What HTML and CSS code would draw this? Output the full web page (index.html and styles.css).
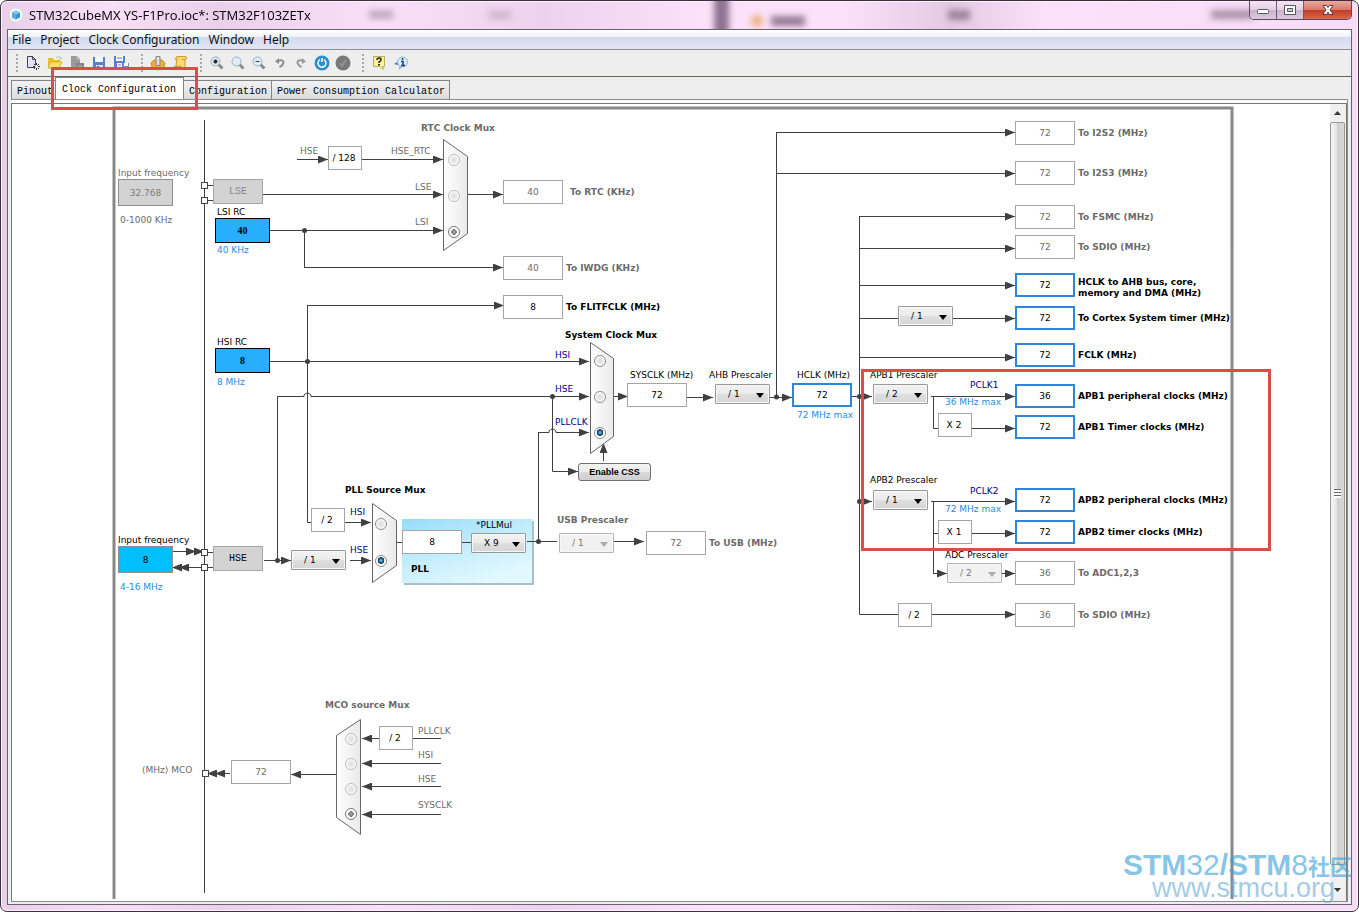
FILE: index.html
```html
<!DOCTYPE html>
<html lang="en">
<head>
    <meta charset="UTF-8">
    <meta name="viewport" content="width=device-width, initial-scale=1.0">
    <title>STM32CubeMX YS-F1Pro.ioc*: STM32F103ZETx</title>
    <link rel="stylesheet" href="styles.css">
</head>
<body>
<div class="window">
    <!-- Glass behind the title bar -->
    <svg class="glass" aria-hidden="true">
        <defs>
            <filter id="soft" x="-50%" y="-50%" width="200%" height="200%"><feGaussianBlur stdDeviation="3"/></filter>
        </defs>
        <g filter="url(#soft)">
            <rect x="368" y="9" width="24" height="9" fill="#a893a8" opacity=".7"/>
            <rect x="488" y="10" width="22" height="8" fill="#bfa5bf" opacity=".7"/>
            <rect x="713" y="-6" width="15" height="42" fill="#8d7392"/>
            <circle cx="756" cy="20" r="6" fill="#eab27e"/>
            <rect x="770" y="15" width="34" height="10" fill="#8a6f8a" opacity=".9"/>
            <rect x="947" y="9" width="22" height="10" fill="#8a6f8a" opacity=".8"/>
            <rect x="1210" y="9" width="42" height="9" fill="#8a6f8a" opacity=".7"/>
        </g>
    </svg>

    <header class="titlebar">
        <svg class="app-icon" width="16" height="16" viewBox="0 0 16 16" aria-hidden="true">
            <circle cx="8" cy="8" r="7" fill="#f6fbff" stroke="#cfdcea"/>
            <path d="M8 3.500 12 5.500V10.500L8 12.500 4 10.500V5.500Z" fill="#3c95d2"/>
            <path d="M8 3.500 12 5.500 8 7.500 4 5.500Z" fill="#8cc8ec"/>
            <path d="M8 7.500V12.500L4 10.500V5.500Z" fill="#5aaade"/>
        </svg>
        <h1>STM32CubeMX YS-F1Pro.ioc*: STM32F103ZETx</h1>
        <div class="caption-buttons">
            <button type="button" aria-label="Minimize">
                <svg width="14" height="12" viewBox="0 0 14 12"><rect x="1.500" y="5.500" width="11" height="4" rx="1" fill="#fff" stroke="#535666"/></svg>
            </button>
            <button type="button" aria-label="Maximize">
                <svg width="14" height="12" viewBox="0 0 14 12"><path d="M1.500 1.500h11v9h-11z" fill="#fff" stroke="#535666"/><path d="M4.500 4.500h5v3h-5z" fill="#d9c6dc" stroke="#535666"/></svg>
            </button>
            <button type="button" class="close" aria-label="Close">
                <svg width="14" height="12" viewBox="0 0 14 12"><path d="M2 1.500h3.500L7 3.500 8.500 1.500H12L9 5.800 12.200 10.500H8.600L7 8.200 5.400 10.500H1.800L5 5.800Z" fill="#fff" stroke="#5d3a40"/></svg>
            </button>
        </div>
    </header>

    <div class="client">
        <nav class="menubar">
            <a href="#">File</a>
            <a href="#">Project</a>
            <a href="#">Clock Configuration</a>
            <a href="#">Window</a>
            <a href="#">Help</a>
        </nav>

        <div class="toolbar" role="toolbar" aria-label="Tools">
            <div class="tool-group">
                <button type="button" aria-label="New project">
                    <svg width="16" height="16" viewBox="0 0 16 16"><path d="M2.500 1.500h5l3 3v8h-8z" fill="#dfe3f6" stroke="#444"/><path d="M7.500 1.500v3h3" fill="none" stroke="#444"/><path d="M11.500 8v7M8 11.500h7M9 9l5 5M14 9l-5 5" stroke="#333"/><circle cx="11.500" cy="11.500" r="1.500" fill="#fff"/></svg>
                </button>
                <button type="button" aria-label="Load project">
                    <svg width="16" height="16" viewBox="0 0 16 16"><path d="M1 3h5l1 2h6v2H4l-3 6z" fill="#e9b93a"/><path d="M4 7h11l-3 6H1z" fill="#ffdf6b" stroke="#e0ae35"/><path d="M9 3q3-3 5 1m0-2v2h-2" fill="none" stroke="#aac0d0"/></svg>
                </button>
                <button type="button" aria-label="Close project" disabled>
                    <svg width="16" height="16" viewBox="0 0 16 16"><path d="M2 1h6l3 3v9H2z" fill="#9a9a9a"/><path d="M8 1v3h3" fill="none" stroke="#ccc"/><path d="M7 8h8v6H7z" fill="#858585"/><path d="M9 11h4" stroke="#bbb"/></svg>
                </button>
                <button type="button" aria-label="Save project">
                    <svg width="16" height="16" viewBox="0 0 16 16"><path d="M2 2h12v12H2z" fill="#5b7fc4"/><path d="M4 2h8v5H4z" fill="#f5f8ff"/><path d="M5 10h7v4H5z" fill="#dde5f5"/><path d="M6 11h2v3H6z" fill="#3c5fa5"/></svg>
                </button>
                <button type="button" aria-label="Save project as">
                    <svg width="18" height="16" viewBox="0 0 18 16"><path d="M2 1h11v11H2z" fill="#5b7fc4"/><path d="M4 1h7v5H4zM5 8h5v4H5z" fill="#f5f8ff"/><path d="M5 3h5M6 10h3" stroke="#5b7fc4"/><path d="M11 8h6v7h-6z" fill="#6d8fce"/><path d="M12 8h4v3h-4zM13 12.500h3V15h-3z" fill="#fff"/></svg>
                </button>
            </div>
            <div class="tool-group">
                <button type="button" aria-label="Generate source code">
                    <svg width="16" height="16" viewBox="0 0 16 16"><path d="M1 8 4 5h8l3 3-1 4-3 1-3 2-3-2-3-1z" fill="#f0b02f" stroke="#cf8d17"/><path d="M6 1.500h4v9H6z" fill="#c9cdd2" stroke="#888"/><path d="M8 2v8" stroke="#f4f4f4"/></svg>
                </button>
                <button type="button" aria-label="Generate report">
                    <svg width="16" height="16" viewBox="0 0 16 16"><path d="M5 1.500h9q2 2-1 3v7q0 3-3 3H2q-2-2 1-3h1z" fill="#fbd872" stroke="#d59b26"/><path d="M5 1.500q-3 2-1 4M13 4.500h-3M2 11.500h7q0 3 1 3" fill="none" stroke="#d59b26"/></svg>
                </button>
            </div>
            <div class="tool-group tight">
                <button type="button" aria-label="Zoom in">
                    <svg width="16" height="16" viewBox="0 0 16 16"><path d="m9.500 9.500 4 4" stroke="#8b8b8b" stroke-width="3"/><circle cx="6.500" cy="6.500" r="4.500" fill="#dcedf7" stroke="#9badb8"/><path d="M6.500 4.500v4M4.500 6.500h4" stroke="#222" stroke-width="2"/></svg>
                </button>
                <button type="button" aria-label="Zoom to fit">
                    <svg width="16" height="16" viewBox="0 0 16 16"><path d="m9.500 9.500 4 4" stroke="#8b8b8b" stroke-width="3"/><circle cx="6.500" cy="6.500" r="4.500" fill="#dcedf7" stroke="#9badb8"/></svg>
                </button>
                <button type="button" aria-label="Zoom out">
                    <svg width="16" height="16" viewBox="0 0 16 16"><path d="m9.500 9.500 4 4" stroke="#8b8b8b" stroke-width="3"/><circle cx="6.500" cy="6.500" r="4.500" fill="#dcedf7" stroke="#9badb8"/><path d="M4.500 6.500h4" stroke="#444" stroke-width="1"/></svg>
                </button>
                <button type="button" aria-label="Undo" disabled>
                    <svg width="16" height="16" viewBox="0 0 16 16"><path d="M5.500 6q5-2 6 1 0 3-4 5" fill="none" stroke="#8d8d8d" stroke-width="2"/><path d="M7 3v6L3 6.500z" fill="#8d8d8d"/></svg>
                </button>
                <button type="button" aria-label="Redo" disabled>
                    <svg width="16" height="16" viewBox="0 0 16 16"><path d="M10.500 6q-5-2-6 1 0 3 4 5" fill="none" stroke="#999" stroke-width="2"/><path d="M9 3v6l4-2.500z" fill="#999"/></svg>
                </button>
                <button type="button" aria-label="Refresh">
                    <svg width="16" height="16" viewBox="0 0 16 16"><circle cx="8" cy="8" r="7.500" fill="#2f8fca"/><path d="M6 4.700A4 4 0 1 0 10 4.700" fill="none" stroke="#fff" stroke-width="1.500"/><path d="M8 3v4" stroke="#fff" stroke-width="1.500"/></svg>
                </button>
                <button type="button" aria-label="Resolve clock issues" disabled>
                    <svg width="16" height="16" viewBox="0 0 16 16"><circle cx="8" cy="8" r="7.500" fill="#787878"/><path d="m5 8 2 3 4-6" fill="none" stroke="#929292" stroke-width="2"/></svg>
                </button>
            </div>
            <div class="tool-group">
                <button type="button" aria-label="Help">
                    <svg width="16" height="16" viewBox="0 0 16 16"><path d="M2.500 1.500h11v10h-2l1 3-4-3h-6z" fill="#fdf29a" stroke="#b9ac55"/><path d="M6 5q0-2 2-2t2 1.500Q10 6 8 7v1" fill="none" stroke="#222" stroke-width="1.500"/><path d="M7 9h2v1.500H7z" fill="#222"/></svg>
                </button>
                <button type="button" aria-label="About">
                    <svg width="16" height="16" viewBox="0 0 16 16"><path d="m1 9 5-3-1 4z" fill="#2b6fb8"/><circle cx="9.500" cy="7" r="5" fill="#d9ebf9" stroke="#88b5da"/><path d="M6 12v3l3-3z" fill="#88b5da"/><path d="M8 6.500h2v4M8 10.500h4" fill="none" stroke="#143e86" stroke-width="1.500"/><circle cx="9.500" cy="4" r="1" fill="#143e86"/></svg>
                </button>
            </div>
        </div>

        <div class="tabs" role="tablist">
            <button type="button" role="tab" class="tab">Pinout</button>
            <button type="button" role="tab" class="tab active" aria-selected="true">Clock Configuration</button>
            <button type="button" role="tab" class="tab">Configuration</button>
            <button type="button" role="tab" class="tab">Power Consumption Calculator</button>
            <span class="mark mark-tab"></span>
        </div>

        <main class="pane">
            <div class="view">
                <div class="canvas">
                    <!-- Wires, muxes and captions; the viewBox keeps window coordinates -->
                    <svg class="wires" width="1280" height="795" viewBox="12 104 1280 795">
                        <defs>
                            <marker id="arrow" viewBox="0 0 10 8" refX="10" refY="4" markerWidth="10" markerHeight="8" markerUnits="userSpaceOnUse" orient="auto"><path d="M0 0 10 4 0 8z" fill="#404040"/></marker>
                            <linearGradient id="muxFill"><stop offset="0" stop-color="#fff"/><stop offset="1" stop-color="#e9e9e9"/></linearGradient>
                            <linearGradient id="pllFill" x1="0" y1="0" x2=".6" y2="1"><stop offset="0" stop-color="#98dcfa"/><stop offset=".6" stop-color="#c8effd"/><stop offset="1" stop-color="#e2f8ff"/></linearGradient>
                        </defs>

                        <path class="frame" d="M114 900V108H1232V900"/>
                        <path class="wire" d="M204.500 120V893"/>

                        <!-- PLL block -->
                        <rect x="404" y="521" width="130" height="64" fill="#a9bfca"/>
                        <rect x="402" y="519" width="130" height="64" fill="url(#pllFill)"/>

                        <g class="wire">
                            <path d="M205 185.500H213M205 200.500H213M205 552.500H213M205 567.500H213"/>
                            <path d="M304.500 230V267.500"/>
                            <path d="M307.500 361V305.500M307.500 361V522.500H311"/>
                            <path d="M277.500 560V396.500"/>
                            <path d="M396 542.500H402M462 542.500H471M527 541.500H557"/>
                            <path d="M538.500 541V432.500"/>
                            <path d="M776.500 397V132.500"/>
                            <path d="M859.500 216V614.500H898M859 318.500H898"/>
                            <path d="M933.500 396V428.500H938M933.500 501V573M933 533.500H938"/>
                            <path d="M412 738.500H441"/>
                        </g>
                        <g class="wire">
                            <path class="arrowed" d="M297 159.500H328"/>
                            <path class="arrowed" d="M362 159.500H443"/>
                            <path class="arrowed" d="M263 194.500H443"/>
                            <path class="arrowed" d="M270 230.500H443"/>
                            <path class="arrowed" d="M467 194.500H503"/>
                            <path class="arrowed" d="M304 267.500H503"/>
                            <path class="arrowed" d="M307 305.500H504"/>
                            <path class="arrowed" d="M270 361.500H589"/>
                            <path class="arrowed" d="M277 396.500H304V395Q307.500 391 311 395V396.500H589"/>
                            <path class="arrowed" d="M552.500 396V471.500H578"/>
                            <path class="arrowed" d="M538 432.500H549V431Q552.500 427 556 431V432.500H589"/>
                            <path class="arrowed" d="M345 522.500H371"/>
                            <path class="arrowed" d="M264 560.500H291"/>
                            <path class="arrowed" d="M350 560.500H371"/>
                            <path class="arrowed" d="M603.500 461V443"/>
                            <path class="arrowed" d="M613 396.500H628"/>
                            <path class="arrowed" d="M687 397.500H713"/>
                            <path class="arrowed" d="M770 397.500H792"/>
                            <path class="arrowed" d="M852 396.500H872"/>
                            <path class="arrowed" d="M859 501.500H872"/>
                            <path class="arrowed" d="M614 541.500H644"/>
                            <path class="arrowed" d="M776 132.500H1015"/>
                            <path class="arrowed" d="M776 173.500H1015"/>
                            <path class="arrowed" d="M859 216.500H1015"/>
                            <path class="arrowed" d="M859 248.500H1015"/>
                            <path class="arrowed" d="M859 285.500H1015"/>
                            <path class="arrowed" d="M953 318.500H1015"/>
                            <path class="arrowed" d="M859 357.500H1015"/>
                            <path class="arrowed" d="M931 396.500H1015"/>
                            <path class="arrowed" d="M972 428.500H1015"/>
                            <path class="arrowed" d="M931 501.500H1015"/>
                            <path class="arrowed" d="M972 533.500H1015"/>
                            <path class="arrowed" d="M933 573.500H947"/>
                            <path class="arrowed" d="M1002 573.500H1015"/>
                            <path class="arrowed" d="M932 614.500H1015"/>
                            <path class="arrowed" d="M379 738.500H362"/>
                            <path class="arrowed" d="M441 763.500H362"/>
                            <path class="arrowed" d="M441 786.500H362"/>
                            <path class="arrowed" d="M441 814.500H362"/>
                            <path class="arrowed" d="M336 774.500H291"/>
                            <path class="arrowed" d="M230 773.500H215"/>
                            <path class="arrowed" d="M220 773.500H207"/>
                            <path class="arrowed" d="M173 551.500H196"/>
                            <path class="arrowed" d="M186 551.500H204"/>
                            <path class="arrowed" d="M202 567.500H179"/>
                            <path class="arrowed" d="M186 567.500H172"/>
                        </g>
                        <g fill="#404040">
                            <circle cx="304.500" cy="230.500" r="2.500"/>
                            <circle cx="307.500" cy="361.500" r="2.500"/>
                            <circle cx="277.500" cy="560.500" r="2.500"/>
                            <circle cx="552.500" cy="396.500" r="2.500"/>
                            <circle cx="538.500" cy="541.500" r="2.500"/>
                            <circle cx="776.500" cy="397" r="2.500"/>
                            <circle cx="859.500" cy="396.500" r="2.500"/>
                            <circle cx="859.500" cy="501.500" r="2.500"/>
                        </g>
                        <g class="pad">
                            <rect x="201.500" y="182.500" width="6" height="6"/>
                            <rect x="201.500" y="197.500" width="6" height="6"/>
                            <rect x="201.500" y="549.500" width="6" height="6"/>
                            <rect x="201.500" y="564.500" width="6" height="6"/>
                            <rect x="202.500" y="770.500" width="6" height="6"/>
                        </g>
                        <g class="mux">
                            <path d="M443.500 139.500 467.500 156.500V233.500L443.500 250.500Z"/>
                            <path d="M590.500 342.500 613.500 358.500V436.500L590.500 453.500Z"/>
                            <path d="M372.500 503.500 396.500 520.500V565.500L372.500 582.500Z"/>
                            <path d="M360.500 719.500V834.500L336.500 817.500V735.500Z"/>
                        </g>

                        <!-- Fixed dividers and multipliers -->
                        <g class="factor">
                            <rect x="328.500" y="146.500" width="33" height="23"/>
                            <rect x="311.500" y="508.500" width="33" height="23"/>
                            <rect x="938.500" y="413.500" width="33" height="23"/>
                            <rect x="938.500" y="520.500" width="33" height="23"/>
                            <rect x="898.500" y="603.500" width="33" height="23"/>
                            <rect x="379.500" y="726.500" width="33" height="23"/>
                        </g>
                        <g class="factor-text">
                            <text x="344" y="161">/ 128</text>
                            <text x="327" y="523">/ 2</text>
                            <text x="954" y="428">X 2</text>
                            <text x="954" y="535">X 1</text>
                            <text x="914" y="618">/ 2</text>
                            <text x="395" y="741">/ 2</text>
                        </g>

                        <g class="text dim">
                            <text x="300" y="154">HSE</text>
                            <text x="391" y="154">HSE_RTC</text>
                            <text x="415" y="190">LSE</text>
                            <text x="415" y="225">LSI</text>
                            <text x="118" y="176">Input frequency</text>
                            <text x="120" y="223">0-1000 KHz</text>
                            <text x="142" y="773">(MHz) MCO</text>
                            <text x="418" y="734">PLLCLK</text>
                            <text x="418" y="758">HSI</text>
                            <text x="418" y="782">HSE</text>
                            <text x="418" y="808">SYSCLK</text>
                        </g>
                        <g class="text">
                            <text x="217" y="215">LSI RC</text>
                            <text x="217" y="345">HSI RC</text>
                            <text x="118" y="543">Input frequency</text>
                            <text x="630" y="378">SYSCLK (MHz)</text>
                            <text x="709" y="378">AHB Prescaler</text>
                            <text x="797" y="378">HCLK (MHz)</text>
                            <text x="870" y="378">APB1 Prescaler</text>
                            <text x="870" y="483">APB2 Prescaler</text>
                            <text x="945" y="558">ADC Prescaler</text>
                            <text x="476" y="528">*PLLMul</text>
                        </g>
                        <g class="text limit">
                            <text x="217" y="253">40 KHz</text>
                            <text x="217" y="385">8 MHz</text>
                            <text x="120" y="590">4-16 MHz</text>
                            <text x="797" y="418">72 MHz max</text>
                            <text x="945" y="405">36 MHz max</text>
                            <text x="945" y="512">72 MHz max</text>
                        </g>
                        <g class="text signal">
                            <text x="555" y="358">HSI</text>
                            <text x="555" y="392">HSE</text>
                            <text x="555" y="425">PLLCLK</text>
                            <text x="350" y="515">HSI</text>
                            <text x="350" y="553">HSE</text>
                            <text x="970" y="388">PCLK1</text>
                            <text x="970" y="494">PCLK2</text>
                        </g>
                        <g class="text strong">
                            <text x="565" y="338">System Clock Mux</text>
                            <text x="345" y="493">PLL Source Mux</text>
                            <text x="411" y="572">PLL</text>
                        </g>
                        <g class="text strong dim">
                            <text x="421" y="131">RTC Clock Mux</text>
                            <text x="557" y="523">USB Prescaler</text>
                            <text x="325" y="708">MCO source Mux</text>
                        </g>
                    </svg>

                    <!-- Sources -->
                    <input class="source lse-in off" aria-label="LSE input frequency" value="32.768" disabled>
                    <button type="button" class="osc lse" disabled>LSE</button>
                    <input class="rc lsi" aria-label="LSI RC" value="40" readonly>
                    <input class="rc hsi" aria-label="HSI RC" value="8" readonly>
                    <input class="source hse-in" aria-label="HSE input frequency" value="8">
                    <button type="button" class="osc hse">HSE</button>

                    <!-- Mux inputs -->
                    <input type="radio" name="rtc" class="rtc-1" aria-label="RTC from HSE_RTC" disabled>
                    <input type="radio" name="rtc" class="rtc-2" aria-label="RTC from LSE" disabled>
                    <input type="radio" name="rtc" class="rtc-3" aria-label="RTC from LSI" checked disabled>
                    <input type="radio" name="sys" class="sys-1" aria-label="System clock from HSI">
                    <input type="radio" name="sys" class="sys-2" aria-label="System clock from HSE">
                    <input type="radio" name="sys" class="sys-3" aria-label="System clock from PLLCLK" checked>
                    <input type="radio" name="pll" class="pll-1" aria-label="PLL from HSI">
                    <input type="radio" name="pll" class="pll-2" aria-label="PLL from HSE" checked>
                    <input type="radio" name="mco" class="mco-1" aria-label="MCO from PLLCLK" disabled>
                    <input type="radio" name="mco" class="mco-2" aria-label="MCO from HSI" disabled>
                    <input type="radio" name="mco" class="mco-3" aria-label="MCO from HSE" disabled>
                    <input type="radio" name="mco" class="mco-4" aria-label="MCO from SYSCLK" checked disabled>
                    <button type="button" class="css-button">Enable CSS</button>

                    <!-- Prescalers -->
                    <span class="picker hse-div"><select aria-label="HSE divider"><option>/ 1</option></select></span>
                    <span class="picker pll-mul"><select aria-label="PLLMul"><option>X 9</option></select></span>
                    <span class="picker off usb-div"><select aria-label="USB Prescaler" disabled><option>/ 1</option></select></span>
                    <span class="picker ahb-div"><select aria-label="AHB Prescaler"><option>/ 1</option></select></span>
                    <span class="picker cortex-div"><select aria-label="Cortex Prescaler"><option>/ 1</option></select></span>
                    <span class="picker apb1-div"><select aria-label="APB1 Prescaler"><option>/ 2</option></select></span>
                    <span class="picker apb2-div"><select aria-label="APB2 Prescaler"><option>/ 1</option></select></span>
                    <span class="picker off adc-div"><select aria-label="ADC Prescaler" disabled><option>/ 2</option></select></span>

                    <!-- Frequencies -->
                    <label class="sink to-rtc dim wide"><input value="40" readonly><span>To RTC (KHz)</span></label>
                    <label class="sink to-iwdg dim"><input value="40" readonly><span>To IWDG (KHz)</span></label>
                    <label class="sink to-flit"><input value="8" readonly><span>To FLITFCLK (MHz)</span></label>
                    <label class="sink to-usb dim"><input value="72" readonly><span>To USB (MHz)</span></label>
                    <input class="freq pll-in" aria-label="PLL input" value="8" readonly>
                    <input class="freq sysclk" aria-label="SYSCLK (MHz)" value="72" readonly>
                    <input class="freq hot hclk" aria-label="HCLK (MHz)" value="72">
                    <input class="freq mco dim" aria-label="(MHz) MCO" value="72" readonly>

                    <label class="sink bus i2s2 dim"><input value="72" readonly><span>To I2S2 (MHz)</span></label>
                    <label class="sink bus i2s3 dim"><input value="72" readonly><span>To I2S3 (MHz)</span></label>
                    <label class="sink bus fsmc dim"><input value="72" readonly><span>To FSMC (MHz)</span></label>
                    <label class="sink bus sdio dim"><input value="72" readonly><span>To SDIO (MHz)</span></label>
                    <label class="sink bus ahb hot"><input value="72" readonly><span>HCLK to AHB bus, core,<br>memory and DMA (MHz)</span></label>
                    <label class="sink bus cortex hot"><input value="72" readonly><span>To Cortex System timer (MHz)</span></label>
                    <label class="sink bus fclk hot"><input value="72" readonly><span>FCLK (MHz)</span></label>
                    <label class="sink bus apb1 hot"><input value="36" readonly><span>APB1 peripheral clocks (MHz)</span></label>
                    <label class="sink bus apb1-timer hot"><input value="72" readonly><span>APB1 Timer clocks (MHz)</span></label>
                    <label class="sink bus apb2 hot"><input value="72" readonly><span>APB2 peripheral clocks (MHz)</span></label>
                    <label class="sink bus apb2-timer hot"><input value="72" readonly><span>APB2 timer clocks (MHz)</span></label>
                    <label class="sink bus adc dim"><input value="36" readonly><span>To ADC1,2,3</span></label>
                    <label class="sink bus sdio-half dim"><input value="36" readonly><span>To SDIO (MHz)</span></label>

                    <span class="mark mark-apb"></span>
                </div>
                <div class="scrollbar">
                    <svg width="15" height="18" viewBox="0 0 15 18" aria-hidden="true"><path d="M4 11 7.500 7 11 11z" fill="#333"/></svg>
                    <div class="thumb"></div>
                    <svg width="15" height="36" viewBox="0 0 15 36" aria-hidden="true"><path d="M4 23 7.500 27 11 23z" fill="#333"/></svg>
                </div>
            </div>
        </main>
    </div>

    <div class="watermark">
        <div class="brand"><b>STM</b>32<b>/STM</b>8<b class="cjk">社区</b></div>
        <div class="site">www.stmcu.org</div>
    </div>
</div>
</body>
</html>
```
FILE: styles.css
```css
* {
    box-sizing: border-box;
}

body {
    margin: 0;
    background: #fff;
    color: #000;
    font-family: "Open Sans", "Noto Sans", sans-serif;
}

button,
input,
select {
    margin: 0;
    padding: 0;
    font: inherit;
    color: inherit;
}

/* Window frame */
.window {
    position: relative;
    display: flex;
    flex-direction: column;
    height: 100vh;
    padding: 0 6px 6px;
    border: 1px solid #3d2f40;
    border-radius: 7px;
    overflow: hidden;
    background: linear-gradient(90deg, #e9cfe8, #f7dff6 8%, #ead0e9 16%, #f9e0f8 28%, #ecd2ec 40%, #fbe1fa 52%, #fbe1fa 62%, #e3cae3 70%, #fbe1fa 77%, #f6dcf5);
    box-shadow: inset 0 0 0 1px #fdf4fd;
}

.glass {
    position: absolute;
    top: 0;
    left: 0;
    width: 100%;
    height: 28px;
}

.titlebar {
    position: relative;
    display: flex;
    flex: none;
    align-items: center;
    height: 28px;
    padding-left: 1px;
}

.titlebar h1 {
    flex: 1;
    margin: 0 0 0 5px;
    font-size: 13px;
    font-weight: normal;
    line-height: 16px;
}

.caption-buttons {
    display: flex;
    align-self: flex-start;
    height: 19px;
    border: 1px solid #5b4a5e;
    border-top: 0;
    border-radius: 0 0 5px 5px;
    overflow: hidden;
}

.caption-buttons button {
    display: grid;
    place-items: center;
    width: 27px;
    border: 0;
    border-right: 1px solid #6b5a6e;
    background: linear-gradient(#f3e3f3, #e3cfe4 48%, #c9b2cb 50%, #dcc8dd);
}

.caption-buttons .close {
    width: 47px;
    border-right: 0;
    background: linear-gradient(#eaa99c, #d8796a 48%, #c23a22 50%, #d8694d);
}

/* Client area */
.client {
    position: relative;
    display: flex;
    flex: 1;
    flex-direction: column;
    min-height: 0;
    border: 1px solid #6a636f;
    background: #eee;
}

.menubar {
    display: flex;
    flex: none;
    gap: 9px;
    height: 20px;
    padding: 0 4px;
    border-bottom: 1px solid #8c8f98;
    background: linear-gradient(#fff, #eef2f9 35%, #d5dbec 38%, #e2e6f5);
    font-family: "Noto Sans", sans-serif;
    font-size: 12px;
    line-height: 19px;
}

.menubar a {
    color: #111;
    text-decoration: none;
}

.toolbar {
    display: flex;
    flex: none;
    gap: 8px;
    height: 27px;
    padding-left: 7px;
    border-bottom: 1px solid #62665f;
}

.tool-group {
    display: flex;
    align-items: center;
}

.tool-group::before {
    content: "";
    width: 4px;
    height: 20px;
    margin-right: 3px;
    background: radial-gradient(circle at 2px 2px, #aaa 1px, transparent 1px) 0 0 / 4px 4px;
}

.tool-group button {
    display: grid;
    place-items: center;
    width: 22px;
    height: 22px;
    border: 0;
    background: none;
}

.tool-group.tight button {
    width: 21px;
}

.tabs {
    position: relative;
    display: flex;
    flex: none;
    align-items: flex-end;
    height: 22px;
    padding-left: 3px;
    font-family: "Liberation Mono", monospace;
    font-size: 10px;
    line-height: 18px;
}

.tab {
    flex: none;
    height: 19px;
    padding: 2px 4px 0 5px;
    border: 1px solid #7f858c;
    border-bottom: 0;
    background: linear-gradient(#f2f2f2, #dcdcdc);
    white-space: nowrap;
}

.tab + .tab {
    border-left: 0;
}

.tab.active {
    z-index: 1;
    height: 22px;
    margin-left: -3px;
    padding: 2px 7px 0 6px;
    border-left: 1px solid #7f858c;
    background: #fff;
}

/* Red annotation boxes */
.mark {
    position: absolute;
    border: 3px solid #da4e48;
    pointer-events: none;
}

.mark-tab {
    z-index: 2;
    top: -10px;
    left: 43px;
    width: 147px;
    height: 43px;
}

.mark-apb {
    top: 265px;
    left: 849px;
    width: 410px;
    height: 182px;
}

/* Document pane */
.pane {
    display: flex;
    flex: 1;
    min-height: 0;
    margin: 0 3px 2px;
    padding-top: 3px;
    border: 1px solid #8a8d92;
    border-left: 0;
    background: #fff;
}

.view {
    display: flex;
    flex: 1;
    min-width: 0;
    border: 1px solid #777;
    border-right: 0;
    border-bottom: 0;
}

.canvas {
    position: relative;
    flex: 1;
    min-width: 0;
    overflow: hidden;
    font-family: "DejaVu Sans", sans-serif;
    font-size: 9px;
}

.wires {
    display: block;
}

.frame {
    fill: none;
    stroke: #888;
    stroke-width: 3;
}

.wire {
    fill: none;
    stroke: #404040;
}

.arrowed {
    marker-end: url(#arrow);
}

.pad {
    fill: #fff;
    stroke: #444;
}

.mux {
    fill: url(#muxFill);
    stroke: #666;
}

.factor {
    fill: #fff;
    stroke: #a5a5a5;
}

.factor-text {
    text-anchor: middle;
}

.text.dim {
    fill: #6b6b6b;
}

.text.limit {
    fill: #2a8be0;
}

.text.signal {
    fill: #00008b;
}

.text.strong {
    font-weight: bold;
}

/* Fields on the canvas */
.canvas input:not([type="radio"]) {
    width: 60px;
    height: 24px;
    border: 1px solid #a5a5a5;
    border-radius: 0;
    background: #fff;
    text-align: center;
}

.canvas > input,
.canvas > button,
.sink,
.picker {
    position: absolute;
}

.dim,
.sink.dim {
    color: #6b6b6b;
}

.canvas .hot input,
.canvas input.hot {
    border: 2px solid #2b86dc;
}

.canvas input.source {
    left: 106px;
    width: 55px;
    height: 27px;
    border-color: #8f8f8f;
    background: #00bfff;
}

.canvas input.source.off {
    background: #d3d3d3;
    color: #7d7d7d;
}

.lse-in { top: 75px; }
.hse-in { top: 442px; }

.canvas input.rc {
    left: 203px;
    width: 55px;
    height: 25px;
    border-color: #000;
    background: #27aefc;
    font-family: "Liberation Serif", serif;
    font-size: 10px;
    font-weight: bold;
}

.lsi { top: 114px; }
.hsi { top: 244px; }

.osc {
    left: 201px;
    width: 50px;
    height: 25px;
    border: 1px solid #a5a5a5;
    background: #d3d3d3;
    font-family: "Liberation Mono", monospace;
    font-size: 10px;
}

.osc:disabled {
    color: #888;
}

.lse { top: 75px; }
.hse { top: 442px; }

/* Radio buttons inside the muxes */
.canvas input[type="radio"] {
    width: 12px;
    height: 12px;
    appearance: none;
    border: 1px solid #8b8b8b;
    border-radius: 50%;
    background: radial-gradient(#dcdcdc, #f4f4f4 70%);
    box-shadow: inset 0 0 0 1px #fff;
}

.canvas input[type="radio"]:checked {
    background: radial-gradient(circle at 50% 45%, #7fd3f5, #1c6fa5 25%, #12324c 42%, #fff 48%);
}

.canvas input[type="radio"]:disabled {
    border-color: #bbb;
}

.canvas input[type="radio"]:checked:disabled {
    border-color: #777;
    background: radial-gradient(#aaa, #777 36%, #fff 42%);
}

.rtc-1, .rtc-2, .rtc-3 { left: 436px; }
.rtc-1 { top: 50px; }
.rtc-2 { top: 86px; }
.rtc-3 { top: 122px; }

.sys-1, .sys-2, .sys-3 { left: 582px; }
.sys-1 { top: 251px; }
.sys-2 { top: 287px; }
.sys-3 { top: 323px; }

.pll-1, .pll-2 { left: 363px; }
.pll-1 { top: 414px; }
.pll-2 { top: 451px; }

.mco-1, .mco-2, .mco-3, .mco-4 { left: 333px; }
.mco-1 { top: 629px; }
.mco-2 { top: 654px; }
.mco-3 { top: 679px; }
.mco-4 { top: 704px; }

.css-button {
    top: 359px;
    left: 566px;
    width: 73px;
    height: 18px;
    border: 1px solid #707070;
    border-radius: 3px;
    background: linear-gradient(#f4f4f4, #ebebeb 48%, #dadada 50%, #cfcfcf);
    font-family: "Liberation Sans", sans-serif;
    font-weight: bold;
}

/* Prescaler drop-downs */
.picker {
    width: 55px;
    height: 20px;
}

.picker select {
    width: 100%;
    height: 100%;
    padding-left: 12px;
    appearance: none;
    border: 1px solid #999;
    border-radius: 1px;
    background: linear-gradient(#f2f2f2, #ebebeb 48%, #dfdfdf 50%, #d5d5d5);
    box-shadow: inset 0 0 0 1px #f8f8f8;
}

.picker::after {
    content: "";
    position: absolute;
    top: 9px;
    right: 6px;
    border: 4px solid transparent;
    border-top: 5px solid #000;
    border-bottom: 0;
    pointer-events: none;
}

.picker.off select {
    border-color: #b5b5b5;
    background: #f1f1f1;
    color: #777;
    opacity: 1;
}

.picker.off::after {
    border-top-color: #aaa;
}

.hse-div { top: 446px; left: 279px; }
.pll-mul { top: 429px; left: 459px; }
.usb-div { top: 429px; left: 547px; }
.ahb-div { top: 280px; left: 703px; }
.cortex-div { top: 202px; left: 886px; }
.apb1-div { top: 280px; left: 861px; }
.apb2-div { top: 386px; left: 861px; }
.adc-div { top: 459px; left: 935px; }

/* Output fields with their captions */
.sink {
    display: flex;
    align-items: center;
    gap: 3px;
    font-weight: bold;
    line-height: 11px;
    white-space: nowrap;
}

.sink.wide {
    gap: 7px;
}

.sink input {
    font-weight: normal;
}

.to-rtc { top: 76px; left: 491px; }
.to-iwdg { top: 152px; left: 491px; }
.to-flit { top: 191px; left: 491px; }
.to-usb { top: 427px; left: 634px; }
.pll-in { top: 426px; left: 390px; }
.sysclk { top: 279px; left: 615px; }
.hclk { top: 279px; left: 780px; }
.mco { top: 656px; left: 219px; }

.bus { left: 1003px; }
.i2s2 { top: 17px; }
.i2s3 { top: 57px; }
.fsmc { top: 101px; }
.sdio { top: 131px; }
.ahb { top: 169px; }
.cortex { top: 202px; }
.fclk { top: 239px; }
.apb1 { top: 280px; }
.apb1-timer { top: 311px; }
.apb2 { top: 384px; }
.apb2-timer { top: 416px; }
.adc { top: 457px; }
.sdio-half { top: 499px; }

/* The two-line caption hangs a little below its field */
.ahb {
    height: 24px;
}

.ahb span {
    padding-top: 5px;
}

/* Scroll bar */
.scrollbar {
    display: flex;
    flex: none;
    flex-direction: column;
    width: 17px;
    padding-right: 1px;
    border-right: 1px solid #777;
    background: #f0f0f0;
}

.scrollbar svg {
    flex: none;
}

.thumb {
    flex: 1;
    border: 1px solid #979797;
    border-radius: 2px;
    background:
        repeating-linear-gradient(#666 0 1px, #fff 1px 3px) center / 7px 9px no-repeat,
        linear-gradient(90deg, #f5f5f5, #e4e4e4 48%, #cfcfcf 50%, #dadada);
}

/* Site watermark over the bottom right corner */
.watermark {
    position: absolute;
    right: 6px;
    bottom: 12px;
    color: #3c9fd6;
    font-family: "Liberation Sans", "Noto Sans CJK SC", sans-serif;
    font-size: 27px;
    line-height: 21px;
    opacity: .6;
    pointer-events: none;
}

.brand {
    font-size: 30px;
}

.cjk {
    font-size: 22px;
}

.site {
    padding-left: 29px;
    color: #6aa9d6;
}
```
